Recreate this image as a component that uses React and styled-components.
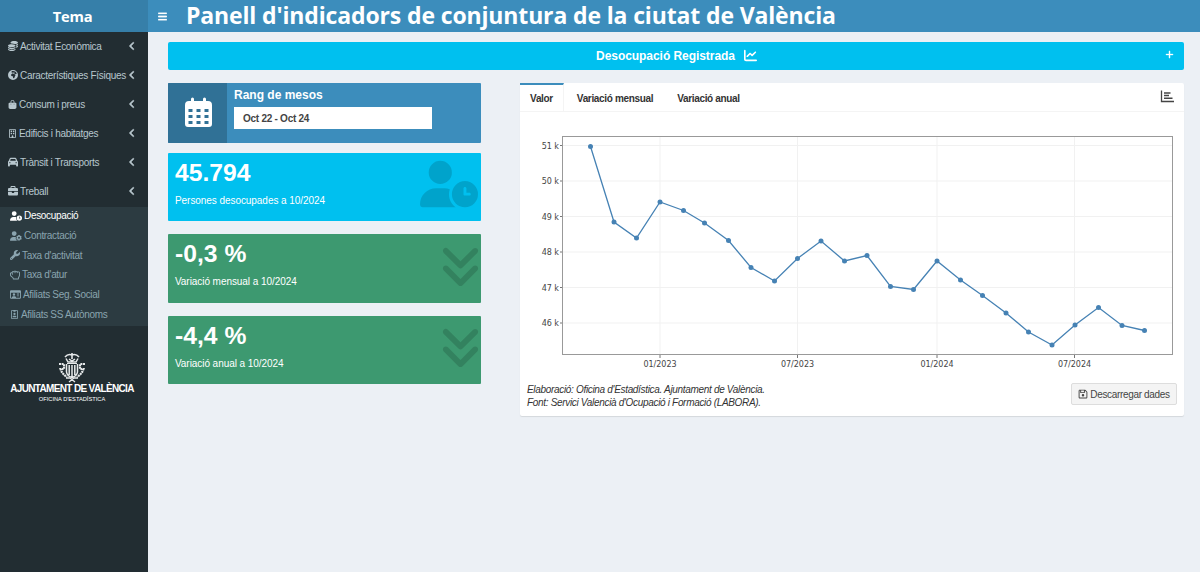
import React from 'react'
import styled, { createGlobalStyle } from 'styled-components'
import {
  FaCoins, FaEarthAfrica, FaBagShopping, FaRegBuilding, FaCar, FaBriefcase,
  FaUserClock, FaUserGear, FaWrench, FaRegIdCard, FaRegIdBadge, FaAngleLeft,
  FaAnglesDown, FaBars, FaChartLine, FaPlus, FaRegFloppyDisk
} from 'react-icons/fa6'
import { FaRegHandRock } from 'react-icons/fa'

const GlobalStyle = createGlobalStyle`
  * { box-sizing: border-box; }
  body {
    margin: 0;
    background: #ecf0f5;
    font-family: "Liberation Sans", Arial, sans-serif;
    font-size: 10px;
    color: #333;
    overflow: hidden;
  }
  svg { flex-shrink: 0; }
`

const Page = styled.div`
  display: grid;
  grid-template-columns: 148px 1fr;
  grid-template-rows: 32px 540px;
  width: 1200px;
  height: 572px;
`

const Brand = styled.div`
  display: flex;
  align-items: center;
  justify-content: center;
  padding-right: 3px;
  background: #367fa9;
  color: #fff;
  font: 700 14.7px "Open Sans", sans-serif;
  letter-spacing: -0.2px;
`

const Navbar = styled.header`
  display: flex;
  align-items: center;
  padding-left: 10px;
  background: #3c8dbc;
  color: #fff;
  svg { width: 9px; height: 11px; stroke: #fff; stroke-width: 16px; }
`

const Title = styled.h1`
  margin: 0 0 0 19px;
  font: 700 23px/30px "Open Sans", sans-serif;
  letter-spacing: -0.14px;
  padding-bottom: 2px;
  white-space: nowrap;
`

const Sidebar = styled.nav`
  background: #222d32;
  color: #b8c7ce;
`

const MenuItem = styled.div`
  display: flex;
  align-items: center;
  height: 29px;
  padding: 0 11px 1px 8px;
  letter-spacing: -0.3px;
  white-space: nowrap;
  span { margin-left: 2px; flex: 1; }
  > svg:last-child { stroke: currentColor; stroke-width: 30px; }
`

const SubMenu = styled.div`
  margin-top: 1px;
  height: 118.5px;
  background: #2c3b41;
`

const SubItem = styled.div`
  display: flex;
  align-items: center;
  height: 19.7px;
  padding: 0 0 2px 10px;
  color: ${props => props.$active ? '#fff' : '#8aa4af'};
  letter-spacing: -0.32px;
  white-space: nowrap;
  span { margin-left: 2px; }
`

const Crest = styled.div`
  display: flex;
  flex-direction: column;
  align-items: center;
  padding: 26px 4px 0 0;
  color: #fff;
  white-space: nowrap;
  strong { font-size: 10px; line-height: 12px; letter-spacing: -0.66px; }
  small { font-size: 5.7px; line-height: 9px; }
`

const Content = styled.main`
  padding: 10px 16px 0 20px;
`

const Banner = styled.div`
  display: flex;
  align-items: center;
  height: 28px;
  padding: 0 10px 1px 24px;
  border-radius: 2px;
  background: #00c0ef;
  color: #fff;
  font-size: 12px;
  font-weight: bold;
  > svg { stroke: #fff; stroke-width: 16px; margin-bottom: 2px; }
`

const BannerText = styled.div`
  flex: 1;
  display: flex;
  align-items: center;
  justify-content: center;
  gap: 9px;
  padding-right: 4px;
  letter-spacing: -0.05px;
`

const Columns = styled.div`
  display: grid;
  grid-template-columns: 313px 664px;
  gap: 39px;
  margin-top: 13px;
  align-items: start;
`

const RangeBox = styled.section`
  display: flex;
  height: 60px;
  border-radius: 1px;
  background: #3c8dbc;
  overflow: hidden;
`

const RangeIcon = styled.div`
  display: flex;
  align-items: center;
  justify-content: center;
  width: 59px;
  padding: 0 0 1px 1px;
  background: #307196;
`

const RangeBody = styled.div`
  padding: 4px 0 0 7px;
  color: #fff;
  font-size: 12px;
  font-weight: bold;
  line-height: 16px;
`

const RangeInput = styled.div`
  width: 198px;
  height: 22px;
  margin-top: 4px;
  padding-left: 9px;
  background: #fff;
  color: #444;
  font-size: 10px;
  letter-spacing: -0.26px;
  line-height: 23px;
`

const ValueBox = styled.section`
  display: flex;
  justify-content: space-between;
  height: 68.5px;
  margin-top: ${props => props.$top}px;
  padding: 5px 0 0 7px;
  border-radius: 1px;
  background: ${props => props.$color};
  color: #fff;
  h2 { margin: 0; font-size: 24.7px; line-height: 30px; }
  p { margin: 5px 0 0; font-size: 10px; line-height: 15px; letter-spacing: -0.06px; }
`

const ValueIcon = styled.div`
  display: flex;
  margin-top: ${props => props.$top}px;
  margin-right: ${props => props.$right}px;
  color: rgba(0, 0, 0, 0.15);
`

const Card = styled.section`
  height: 333px;
  border-radius: 2px;
  background: #fff;
  box-shadow: 0 1px 1px rgba(0, 0, 0, 0.1);
`

const Tabs = styled.div`
  display: flex;
  height: 29px;
  border-bottom: 1px solid #f4f4f4;
`

const Tab = styled.div`
  width: ${props => props.$width}px;
  padding-top: ${props => props.$active ? 8 : 10}px;
  border-top: ${props => props.$active ? '2px solid #3c8dbc' : '0'};
  border-right: ${props => props.$active ? '1px solid #f4f4f4' : '0'};
  font-size: 10px;
  font-weight: bold;
  letter-spacing: -0.34px;
  line-height: 12px;
  text-align: center;
  white-space: nowrap;
`

const TabTool = styled.div`
  margin-left: auto;
  padding: 7px 10px 0 0;
`

const CardFooter = styled.div`
  display: flex;
  justify-content: space-between;
  padding: 9px 7px 0;
  p {
    margin: 0;
    font-size: 10px;
    font-style: italic;
    letter-spacing: -0.32px;
    line-height: 13px;
    white-space: nowrap;
  }
`

const DownloadButton = styled.button`
  display: flex;
  align-items: center;
  justify-content: center;
  gap: 2px;
  width: 106px;
  height: 22px;
  padding: 0;
  border: 1px solid #ddd;
  border-radius: 2px;
  background: #f4f4f4;
  color: #444;
  font: 10px "Liberation Sans", Arial, sans-serif;
  letter-spacing: -0.34px;
  white-space: nowrap;
`

const menu = [
  { label: 'Activitat Econòmica', icon: FaCoins },
  { label: 'Característiques Físiques', icon: FaEarthAfrica },
  { label: 'Consum i preus', icon: FaBagShopping, size: 9 },
  { label: 'Edificis i habitatges', icon: FaRegBuilding, size: 9 },
  { label: 'Trànsit i Transports', icon: FaCar },
  { label: 'Treball', icon: FaBriefcase },
]

const subMenu = [
  { label: 'Desocupació', icon: FaUserClock, size: 12, active: true },
  { label: 'Contractació', icon: FaUserGear, size: 12 },
  { label: "Taxa d'activitat", icon: FaWrench },
  { label: "Taxa d'atur", icon: FaRegHandRock },
  { label: 'Afiliats Seg. Social', icon: FaRegIdCard, size: 11 },
  { label: 'Afiliats SS Autònoms', icon: FaRegIdBadge, size: 9 },
]

// [x, y] inside the 664x262 chart area
const points = [
  [70.5, 34.5], [94, 110], [116.5, 126], [140, 90], [163.5, 98.5], [184.5, 111],
  [208.5, 128.5], [231, 155.5], [254.5, 169], [277.5, 146.5], [301, 129], [324.5, 149],
  [347, 143.5], [370.5, 174.5], [393.5, 177.5], [417, 149], [440.5, 168], [462.5, 183.5],
  [486, 201], [508.5, 220], [532, 233], [555, 213], [578.5, 195.5], [602, 213.5], [624.5, 218.5],
]
const yTicks = [['51 k', 33.5], ['50 k', 69], ['49 k', 104.5], ['48 k', 140], ['47 k', 175.5], ['46 k', 211]]
const xTicks = [['01/2023', 140], ['07/2023', 277.5], ['01/2024', 417], ['07/2024', 554.5]]

const CalendarIcon = () => (
  <svg width="27" height="31" viewBox="0 0 27 31">
    <path fill="#fff" fillRule="evenodd" d="M6 4V2a1.5 1.5 0 0 1 3 0v2h9V2a1.5 1.5 0 0 1 3 0v2h2a4 4 0 0 1 4 4v19a3 3 0 0 1-3 3H3a3 3 0 0 1-3-3V8a4 4 0 0 1 4-4ZM3.500 12h4v3h-4ZM11.500 12h4v3h-4ZM19.500 12h4v3h-4ZM3.500 18h4v3h-4ZM11.500 18h4v3h-4ZM19.500 18h4v3h-4ZM3.500 24h4v3h-4ZM11.500 24h4v3h-4ZM19.500 24h4v3h-4Z" />
  </svg>
)

const BarsIcon = () => (
  <svg width="14" height="13" viewBox="0 0 14 13" fill="none" stroke="#444">
    <path strokeWidth="1.3" d="M1.500 0.500V11.500H14" />
    <path strokeWidth="1.5" d="M4 3H10.500M4 5.500H9M4 8.300H12.500" />
  </svg>
)

const CrestIcon = () => (
  <svg width="28" height="31" viewBox="0 0 28 31" fill="none" stroke="#e6e9ea">
    <path strokeWidth="1.600" d="M7 5Q10 1.500 14 3Q18 1.500 21 5M14 1V7" />
    <path strokeWidth="1.500" d="M8 6.500L10 10H18L20 6.500M11 7L14 9L17 7" />
    <path strokeWidth="1" d="M9 11.500H19" />
    <path strokeWidth="1.500" d="M8.500 12V20Q9 24 14 25.500Q19 24 19.500 20V12M11.200 13V23M14 13V25M16.800 13V23" />
    <path strokeWidth="2.200" strokeDasharray="2 .6" d="M1 12H6V17H2.500Q4 22 9 25M27 12H22V17H25.500Q24 22 19 25" />
    <path strokeWidth="1.300" d="M8 26L12 26L17 30M20 26L16 26L11 30" />
  </svg>
)

const Chart = () => (
  <svg width="664" height="262" viewBox="0 0 664 262" style={{ display: 'block' }}>
    {yTicks.map(([label, y]) => (
      <g key={label}>
        <path d={`M43 ${y}H652`} stroke="#f1f1f1" />
        <path d={`M40 ${y}H43`} stroke="#777" />
        <text x="39" y={y + 3} textAnchor="end" fontFamily="DejaVu Sans" fontSize="8" fill="#444">{label}</text>
      </g>
    ))}
    {xTicks.map(([label, x]) => (
      <g key={label}>
        <path d={`M${x} 25V242`} stroke="#f1f1f1" />
        <path d={`M${x} 243V246`} stroke="#777" />
        <text x={x} y="255" textAnchor="middle" fontFamily="DejaVu Sans" fontSize="8" fill="#444">{label}</text>
      </g>
    ))}
    <rect x="42.500" y="24.500" width="610" height="218" fill="none" stroke="#999" />
    <polyline points={points.join(' ')} fill="none" stroke="#4682b4" strokeWidth="1.300" />
    {points.map(([x, y]) => <circle key={x} cx={x} cy={y} r="2.500" fill="#4682b4" />)}
  </svg>
)

const App = () => (
  <Page>
    <GlobalStyle />
    <Brand>Tema</Brand>
    <Navbar>
      <FaBars />
      <Title>Panell d'indicadors de conjuntura de la ciutat de València</Title>
    </Navbar>
    <Sidebar>
      {menu.map(({ label, icon: Icon, size }) => (
        <MenuItem key={label}>
          <Icon size={size || 10} />
          <span>{label}</span>
          <FaAngleLeft size={10} />
        </MenuItem>
      ))}
      <SubMenu>
        {subMenu.map(({ label, icon: Icon, size, active }) => (
          <SubItem key={label} $active={active}>
            <Icon size={size || 10} />
            <span>{label}</span>
          </SubItem>
        ))}
      </SubMenu>
      <Crest>
        <CrestIcon />
        <strong>AJUNTAMENT DE VALÈNCIA</strong>
        <small>OFICINA D'ESTADÍSTICA</small>
      </Crest>
    </Sidebar>
    <Content>
      <Banner>
        <BannerText>Desocupació Registrada <FaChartLine size={13} /></BannerText>
        <FaPlus size={9} />
      </Banner>
      <Columns>
        <div>
          <RangeBox>
            <RangeIcon><CalendarIcon /></RangeIcon>
            <RangeBody>
              Rang de mesos
              <RangeInput>Oct 22 - Oct 24</RangeInput>
            </RangeBody>
          </RangeBox>
          <ValueBox $color="#00c0ef" $top={9.5}>
            <div>
              <h2>45.794</h2>
              <p>Persones desocupades a 10/2024</p>
            </div>
            <ValueIcon $top={-3} $right={3}><FaUserClock size={58} /></ValueIcon>
          </ValueBox>
          <ValueBox $color="#3d9970" $top={13}>
            <div>
              <h2>-0,3 %</h2>
              <p>Variació mensual a 10/2024</p>
            </div>
            <ValueIcon $top={3} $right={-3}><FaAnglesDown size={47} /></ValueIcon>
          </ValueBox>
          <ValueBox $color="#3d9970" $top={13}>
            <div>
              <h2>-4,4 %</h2>
              <p>Variació anual a 10/2024</p>
            </div>
            <ValueIcon $top={2} $right={-3}><FaAnglesDown size={47} /></ValueIcon>
          </ValueBox>
        </div>
        <Card>
          <Tabs>
            <Tab $active $width={44}>Valor</Tab>
            <Tab $width={102}>Variació mensual</Tab>
            <Tab $width={85}>Variació anual</Tab>
            <TabTool><BarsIcon /></TabTool>
          </Tabs>
          <Chart />
          <CardFooter>
            <p>
              Elaboració: Oficina d'Estadística. Ajuntament de València.<br />
              Font: Servici Valencià d'Ocupació i Formació (LABORA).
            </p>
            <DownloadButton><FaRegFloppyDisk size={10} />Descarregar dades</DownloadButton>
          </CardFooter>
        </Card>
      </Columns>
    </Content>
  </Page>
)

export default App
